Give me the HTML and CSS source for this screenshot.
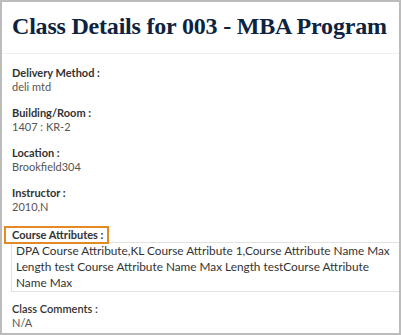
FILE: index.html
```html
<!DOCTYPE html>
<html lang="en">
<head>
  <meta charset="UTF-8" />
  <meta name="viewport" content="width=device-width, initial-scale=1" />
  <title>Class Details</title>
  <link rel="stylesheet" href="styles.css">
</head>
<body>

  <div class="panel">
    <h1 class="panel-title">Class Details for 003 - MBA Program</h1>

    <div class="details">
      <div class="field">
        <div class="field-label">Delivery Method :</div>
        <div class="field-value">deli mtd</div>
      </div>

      <div class="field">
        <div class="field-label">Building/Room :</div>
        <div class="field-value">1407 : KR-2</div>
      </div>

      <div class="field">
        <div class="field-label">Location :</div>
        <div class="field-value">Brookfield304</div>
      </div>

      <div class="field">
        <div class="field-label">Instructor :</div>
        <div class="field-value">2010,N</div>
      </div>

      <div class="field field-attributes">
        <div class="field-label field-label-boxed"><span class="highlight">Course Attributes :</span></div>
        <div class="attribute-box">DPA Course Attribute,KL Course Attribute 1,Course Attribute Name Max Length test Course Attribute Name Max Length testCourse Attribute Name Max</div>
      </div>

      <div class="field">
        <div class="field-label field-label-plain">Class Comments :</div>
        <div class="field-value">N/A</div>
      </div>
    </div>
  </div>

</body>
</html>
```

FILE: styles.css
```css
body {
  margin: 0;
  background: #fff;
}

.panel {
  box-sizing: border-box;
  width: 401px;
  height: 335px;
  border: 2px solid #bcbcbc;
  overflow: hidden;
  background: #fff;
}

.panel-title {
  margin: 0;
  padding: 9px 10px 0;
  height: 42px;
  border-bottom: 1px solid #f0f0f0;
  font-family: "Liberation Serif", serif;
  font-weight: bold;
  font-size: 24px;
  letter-spacing: -0.2px;
  line-height: 30px;
  color: #0d2340;
  white-space: nowrap;
}

.details {
  padding: 12px 0 0 10px;
  font-family: Lato, "Open Sans", sans-serif;
}

.field {
  margin-bottom: 12px;
}

.field-label {
  font-size: 11px;
  line-height: 14px;
  font-weight: bold;
  color: #333;
}

.field-label-plain {
  font-weight: 600;
}

.field-label-boxed {
  height: 18px;
  line-height: 12px;
}

.field-value {
  font-size: 11px;
  line-height: 14px;
  color: #555;
}

.field-attributes {
  margin-bottom: 10px;
}

.highlight {
  display: inline-block;
  margin-left: -8px;
  padding: 1px 4px 1px 6px;
  border: 2px solid #e38b22;
}

.attribute-box {
  width: 380px;
  margin: -2px 0 0 -1px;
  padding: 0 20px 0 4px;
  border: 1px solid #e2e2e2;
  border-right: none;
  font-size: 11.8px;
  line-height: 16px;
  color: #333;
}
```
